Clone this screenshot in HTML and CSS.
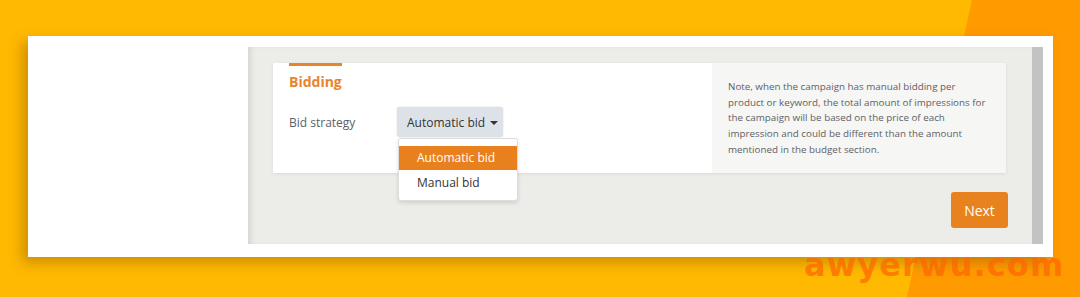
FILE: index.html
```html
<!DOCTYPE html>
<html lang="en">
<head>
<meta charset="UTF-8">
<meta name="viewport" content="width=device-width, initial-scale=1.0">
<title>Bidding</title>
<link rel="stylesheet" href="styles.css">
</head>
<body>
  <div class="backdrop"></div>

  <div class="card">
    <div class="screen">
      <div class="content">
        <div class="panel">
          <div class="panel-main">
            <div class="tab-line"></div>
            <h2 class="section-title">Bidding</h2>
            <div class="field-row">
              <span class="field-label">Bid strategy</span>
              <div class="dropdown">
                <button type="button" class="dropdown-toggle">Automatic bid <span class="caret"></span></button>
                <ul class="dropdown-menu">
                  <li class="active">Automatic bid</li>
                  <li>Manual bid</li>
                </ul>
              </div>
            </div>
          </div>
          <div class="panel-note">
            <p>Note, when the campaign has manual bidding per product or keyword, the total amount of impressions for the campaign will be based on the price of each impression and could be different than the amount mentioned in the budget section.</p>
          </div>
        </div>
        <div class="actions">
          <button type="button" class="btn-next">Next</button>
        </div>
      </div>
      <div class="scrollbar"></div>
    </div>
  </div>

  <div class="watermark">awyerwu.com</div>
</body>
</html>
```

FILE: styles.css
```css
body {
  margin: 0;
  height: 297px;
  overflow: hidden;
  background-color: #ffb900;
  font-family: "Open Sans", "Noto Sans", sans-serif;
  position: relative;
}
.backdrop {
  position: absolute;
  left: 0;
  top: 0;
  width: 100%;
  height: 100%;
  background-color: #ff9b00;
  clip-path: polygon(972px 0, 100% 0, 100% 100%, 907px 100%);
}
.card {
  position: relative;
  margin: 36px 0 0 28px;
  width: 1025px;
  height: 221px;
  box-sizing: border-box;
  padding: 11px 0 0 220px;
  background-color: #fff;
  box-shadow: -6px 6px 12px rgba(120, 70, 0, 0.35);
}
.screen {
  display: flex;
  width: 795px;
  height: 197px;
}
.content {
  flex: 1;
  padding: 16px 26px 0 25px;
  background-color: #ecece8;
  box-shadow: inset 5px 0 6px -3px rgba(0, 0, 0, 0.12);
}
.scrollbar {
  width: 11px;
  background-color: #c3c3c3;
}
.panel {
  display: flex;
  height: 110px;
  background-color: #fff;
  box-shadow: 0 1px 3px rgba(0, 0, 0, 0.08);
}
.panel-main {
  width: 439px;
  padding: 0 16px;
  box-sizing: border-box;
}
.tab-line {
  width: 53px;
  height: 3px;
  background-color: #e8842c;
}
.section-title {
  margin: 6px 0 0;
  font-size: 14px;
  font-weight: 700;
  color: #e8842c;
  line-height: 20px;
}
.field-row {
  display: flex;
  align-items: center;
  margin-top: 15px;
}
.field-label {
  width: 108px;
  font-size: 12px;
  color: #5b5f66;
}
.dropdown {
  position: relative;
}
.dropdown-toggle {
  height: 30px;
  width: 106px;
  padding: 0 0 0 10px;
  border: none;
  border-radius: 3px;
  background-color: #dde2e8;
  box-shadow: 0 0 2px rgba(0, 0, 0, 0.15);
  font-family: inherit;
  font-size: 12px;
  color: #333;
  text-align: left;
  cursor: pointer;
}
.caret {
  display: inline-block;
  margin-left: 2px;
  vertical-align: 2px;
  border-left: 4px solid transparent;
  border-right: 4px solid transparent;
  border-top: 4px solid #333;
}
.dropdown-menu {
  position: absolute;
  left: 1px;
  top: 31px;
  width: 120px;
  margin: 0;
  padding: 7px 0 5px;
  list-style: none;
  background-color: #fff;
  border: 1px solid #ddd;
  border-radius: 3px;
  box-shadow: 0 2px 4px rgba(0, 0, 0, 0.12);
  box-sizing: border-box;
}
.dropdown-menu li {
  height: 24px;
  line-height: 24px;
  padding-left: 18px;
  font-size: 12px;
  color: #333;
}
.dropdown-menu li + li {
  margin-top: 1px;
}
.dropdown-menu li.active {
  background-color: #e8801e;
  color: #fff;
}
.panel-note {
  flex: 1;
  padding: 16px 14px 0 16px;
  background-color: #f6f6f4;
}
.panel-note p {
  margin: 0;
  width: 262px;
  font-size: 9.8px;
  line-height: 15.7px;
  color: #5e6066;
}
.actions {
  display: flex;
  justify-content: flex-end;
  margin: 19px -2px 0 0;
}
.btn-next {
  width: 57px;
  height: 36px;
  border: none;
  border-radius: 3px;
  background-color: #e8821e;
  color: #fff;
  font-family: inherit;
  font-size: 14px;
  cursor: pointer;
}
.watermark {
  position: absolute;
  left: 804px;
  top: 246px;
  font-family: "DejaVu Sans", sans-serif;
  font-size: 32px;
  font-weight: 700;
  color: rgba(255, 100, 0, 0.7);
  letter-spacing: 1.1px;
}
```
